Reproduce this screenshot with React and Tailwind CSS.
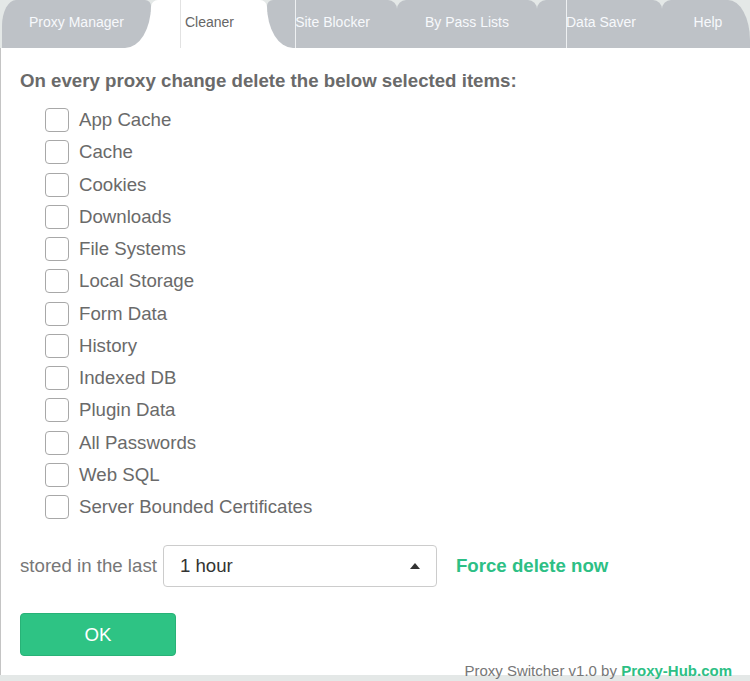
const items = [
  "App Cache",
  "Cache",
  "Cookies",
  "Downloads",
  "File Systems",
  "Local Storage",
  "Form Data",
  "History",
  "Indexed DB",
  "Plugin Data",
  "All Passwords",
  "Web SQL",
  "Server Bounded Certificates",
];

export default function App() {
  return (
    <div className="w-[750px] h-[681px] overflow-hidden bg-white flex flex-col font-['Liberation_Sans',Arial,sans-serif]">
      {/* Tab bar */}
      <div className="flex h-[48px] shrink-0 bg-[#e4e8e7] pl-[2px] overflow-hidden text-[14px] whitespace-nowrap">
        <div className="relative z-10 w-[149px] h-full shrink-0 bg-[#bec2c7] rounded-tl-[14px_26px] rounded-tr-[6px] rounded-br-[26px_42px] flex items-center justify-center pb-[4px] text-[#f7f9fc]">
          Proxy Manager
        </div>
        <div className="relative z-0 w-[116px] h-full shrink-0 bg-white rounded-t-[7px] shadow-[-26px_12px_0_0_#fff,26px_12px_0_0_#fff] text-[#666]">
          <div className="ml-[29px] mr-[29px] h-full border-l border-[#e2e2e2] flex items-center justify-center pb-[4px]">
            Cleaner
          </div>
        </div>
        <div className="relative z-10 w-[130px] h-full shrink-0 bg-[#bec2c7] rounded-tl-[6px] rounded-bl-[26px_42px] rounded-tr-[9px] text-[#f7f9fc]">
          <div className="ml-[28px] mr-[28px] h-full border-l border-[#eef0f2] flex items-center justify-center pb-[4px]">
            Site Blocker
          </div>
        </div>
        <div className="relative z-10 w-[140px] h-full shrink-0 bg-[#bec2c7] rounded-t-[9px] flex items-center justify-center pb-[4px] text-[#f7f9fc]">
          By Pass Lists
        </div>
        <div className="relative z-10 w-[125px] h-full shrink-0 bg-[#bec2c7] rounded-t-[9px] text-[#f7f9fc]">
          <div className="ml-[29px] mr-[27px] h-full border-l border-[#eef0f2] flex items-center justify-center pb-[4px]">
            Data Saver
          </div>
        </div>
        <div className="relative z-10 w-[88px] h-full shrink-0 bg-[#bec2c7] rounded-tl-[9px] rounded-tr-[22px_40px] flex items-center justify-center pb-[4px] pl-[4px] text-[#f7f9fc]">
          Help
        </div>
      </div>

      {/* Content */}
      <div className="flex-1 border-l border-[#c4c4c4] pl-[19px] pt-[21px] flex flex-col text-[#6a6a6a]">
        <div className="text-[18.67px] font-bold leading-[24px] text-[#6a6a6a] whitespace-nowrap">
          On every proxy change delete the below selected items:
        </div>
        <div className="mt-[11px] pl-[25px] flex flex-col">
          {items.map((t) => (
            <label key={t} className="h-[32.25px] flex items-center gap-[10px] text-[18.67px] text-[#6a6a6a]">
              <span className="w-[24px] h-[24px] border border-[#a8a8a8] rounded-[4px] bg-white shrink-0" />
              <span>{t}</span>
            </label>
          ))}
        </div>

        <div className="mt-[22px] flex items-center h-[42px] whitespace-nowrap">
          <span className="text-[18.67px] text-[#777]">stored in the last</span>
          <div className="ml-[6px] w-[274px] h-[42px] shrink-0 border border-[#cccccc] rounded-[4px] flex items-center justify-between pl-[16px] pr-[16px] text-[18.67px] text-[#333]">
            <span>1 hour</span>
            <svg width="10" height="6" viewBox="0 0 10 6" className="block">
              <polygon points="0,6 10,6 5,0" fill="#333" />
            </svg>
          </div>
          <span className="ml-[19px] text-[18.67px] font-bold text-[#2dbf85]">Force delete now</span>
        </div>

        <div className="mt-[26px] w-[156px] h-[43px] bg-[#2ec384] border border-[#28b277] rounded-[4px] text-white text-[18.67px] flex items-center justify-center">
          OK
        </div>

        <div className="mt-auto -mb-[4px] relative z-10 leading-[16px] text-right pr-[18px] text-[15px] text-[#777]">
          Proxy Switcher v1.0 by <span className="font-bold text-[#2dbf85]">Proxy-Hub.com</span>
        </div>
      </div>

      <div className="h-[6px] shrink-0 bg-[#e4e8e7]" />
    </div>
  );
}
